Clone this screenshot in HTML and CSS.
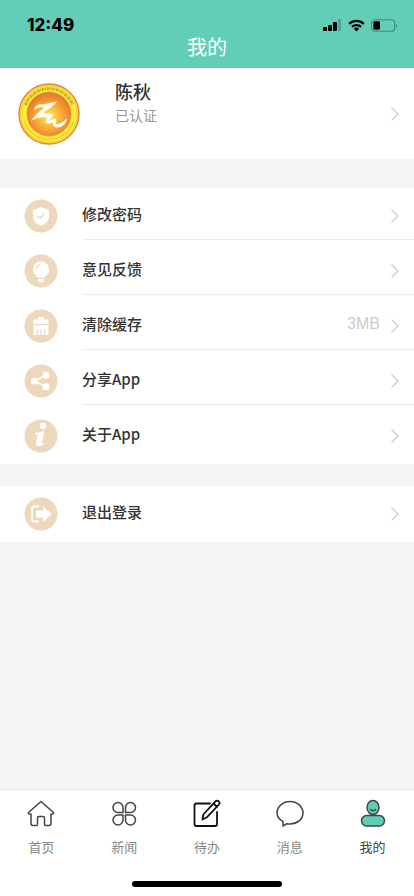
FILE: index.html
```html
<!doctype html>
<html lang="zh-CN">
<head>
    <meta charset="UTF-8">
    <meta name="viewport" content="width=device-width, initial-scale=1.0">
    <title>我的</title>
    <link rel="stylesheet" href="styles.css">
</head>
<body>

<header class="header">
    <div class="status">
        <span class="time">12:49</span>
        <div class="signals">
            <svg width="19" height="13" viewBox="0 0 19 13">
                <rect x="0" y="8" width="4" height="4" rx="1"/>
                <rect x="5" y="6" width="4" height="6" rx="1"/>
                <rect x="10" y="3" width="4" height="9" rx="1"/>
                <rect x="15" y="0" width="3" height="12" rx="1" opacity=".2"/>
            </svg>
            <svg width="17" height="13" viewBox="0 0 17 13">
                <path d="M1.2 4.8a10.6 10.6 0 0 1 14.6 0M4 7.8a6.6 6.6 0 0 1 9 0" fill="none" stroke="#000" stroke-width="2.3"/>
                <path d="M5.9 9.7a3.8 3.8 0 0 1 5.2 0L8.500 12.4z"/>
            </svg>
            <svg width="27" height="13" viewBox="0 0 27 13">
                <rect x=".7" y=".7" width="23" height="11.6" rx="3" fill="none" stroke="#3d8f7d" stroke-width="1.1"/>
                <rect x="2.4" y="2.3" width="6.6" height="8.4" rx="1.4"/>
                <path d="M25 4.4q2 2.1 0 4.2z" fill="#3d8f7d"/>
            </svg>
        </div>
    </div>
    <h1 class="title">我的</h1>
</header>

<main class="content">
    <a href="#" class="profile">
        <svg class="avatar" viewBox="0 0 62 62">
            <defs>
                <radialGradient id="sun" cx=".5" cy=".56" r=".52">
                    <stop offset="0" stop-color="#ffee55"/>
                    <stop offset=".5" stop-color="#f8b236"/>
                    <stop offset="1" stop-color="#e67a2e"/>
                </radialGradient>
            </defs>
            <circle cx="31" cy="31" r="30" fill="#fdea3c" stroke="#d98a45" stroke-width="1.4"/>
            <circle cx="31" cy="31" r="28.400" fill="none" stroke="#f4c53a" stroke-width="1"/>
            <path d="M7.500 22a25.200 25.200 0 0 1 47-.5" fill="none" stroke="#c9a32a" stroke-width="3" stroke-dasharray="2 .8 1 .9"/>
            <path d="M6.500 38a25.500 25.500 0 0 0 49 0" fill="none" stroke="#e3c02c" stroke-width="1.4" stroke-dasharray="1 .6"/>
            <circle cx="31" cy="31" r="22" fill="url(#sun)" stroke="#dc9a35" stroke-width=".8"/>
            <path d="M16 27Q17.500 20.500 25 21.500L39 18.500Q36 23 25.500 29.500L35 31.500Q36 33 30.500 37.500L37.500 35.500Q39.500 36 37.500 41Q43 41.500 49.500 35Q47 45 38.500 44.500Q34 43.500 35 39.500Q30 41.500 28 40Q27 38 29.500 34.500Q20 33.500 13 38Q17 32 26 24.500Q20 23.500 16 27z" fill="#fffdf0"/>
        </svg>
        <div class="user">
            <span class="name">陈秋</span>
            <span class="verified">已认证</span>
        </div>
        <svg class="arrow" viewBox="0 0 10 16"><path d="M1.500 1.500L8 8l-6.500 6.500"/></svg>
    </a>

    <nav class="menu">
        <a href="#" class="item">
            <svg class="icon" viewBox="0 0 34 34">
                <circle class="disc" cx="17" cy="17" r="16.500"/>
                <path d="M17 8l8 3v6.500q0 6-8 9.500q-8-3.500-8-9.500V11z"/>
                <path class="cut" d="M13.500 17l2.500 2.500 4.500-5"/>
            </svg>
            <span class="label">修改密码</span>
            <svg class="arrow" viewBox="0 0 10 16"><path d="M1.500 1.500L8 8l-6.500 6.500"/></svg>
        </a>
        <a href="#" class="item">
            <svg class="icon" viewBox="0 0 34 34">
                <circle class="disc" cx="17" cy="17" r="16.500"/>
                <path d="M17 7.500a8 8 0 0 1 5 14.200q-1.500 1.300-1.500 2.300h-7q0-1-1.500-2.300A8 8 0 0 1 17 7.500zM13.500 25h7v1.500l-2 2h-3l-2-2z"/>
                <path class="cut" d="M12.200 14.500q.8-3 3.800-3.800"/>
            </svg>
            <span class="label">意见反馈</span>
            <svg class="arrow" viewBox="0 0 10 16"><path d="M1.500 1.500L8 8l-6.500 6.500"/></svg>
        </a>
        <a href="#" class="item">
            <svg class="icon" viewBox="0 0 34 34">
                <circle class="disc" cx="17" cy="17" r="16.500"/>
                <path d="M14 10.500V8h6v2.500h4.500V15H9.500v-4.500zM9.500 16.300h15V26h-15z"/>
                <path class="cut" d="M13.500 20.500V26M17 20.500V26M20.500 20.500V26"/>
            </svg>
            <span class="label">清除缓存</span>
            <span class="size">3MB</span>
            <svg class="arrow" viewBox="0 0 10 16"><path d="M1.500 1.500L8 8l-6.500 6.500"/></svg>
        </a>
        <a href="#" class="item">
            <svg class="icon" viewBox="0 0 34 34">
                <circle class="disc" cx="17" cy="17" r="16.500"/>
                <path d="M22 11.500l-12 5.500 12 5.500" fill="none" stroke="#fff" stroke-width="1.700"/>
                <circle cx="22" cy="11.300" r="3.500"/>
                <circle cx="10.300" cy="17" r="3.500"/>
                <circle cx="22" cy="22.700" r="3.500"/>
            </svg>
            <span class="label">分享App</span>
            <svg class="arrow" viewBox="0 0 10 16"><path d="M1.500 1.500L8 8l-6.500 6.500"/></svg>
        </a>
        <a href="#" class="item">
            <svg class="icon" viewBox="0 0 34 34">
                <circle class="disc" cx="17" cy="17" r="16.500"/>
                <circle cx="19" cy="7" r="3.200"/>
                <path d="M11 14.200q4.500-1.500 9.500-2l-2.700 12q1.200.3 3-1.200-1.500 4-6 4.300-3.300 0-2.800-3.600l2-8.200q-1-.5-3 .5z"/>
            </svg>
            <span class="label">关于App</span>
            <svg class="arrow" viewBox="0 0 10 16"><path d="M1.500 1.500L8 8l-6.500 6.500"/></svg>
        </a>
    </nav>

    <nav class="menu logout">
        <a href="#" class="item">
            <svg class="icon" viewBox="0 0 34 34">
                <circle class="disc" cx="17" cy="17" r="16.500"/>
                <path d="M15 9.500H10Q8 9.500 8 11.500v11q0 2 2 2h5" fill="none" stroke="#fff" stroke-width="1.800"/>
                <path d="M12 13.500h7V9l9 8-9 8v-4.500h-7z"/>
            </svg>
            <span class="label">退出登录</span>
            <svg class="arrow" viewBox="0 0 10 16"><path d="M1.500 1.500L8 8l-6.500 6.500"/></svg>
        </a>
    </nav>
</main>

<footer class="footer">
    <nav class="tabs">
        <a href="#" class="tab">
            <svg viewBox="0 0 30 30">
                <path d="M2.500 13.500L15 2.500l12.500 11q.5 1.500-1 1.500H25v9.500q0 2-2 2h-3.500q-1 0-1-1V19q0-1.500-1.500-1.500h-4Q11.500 17.500 11.500 19v6.500q0 1-1 1H7q-2 0-2-2V15H3.500Q2 15 2.500 13.500z"/>
            </svg>
            <span>首页</span>
        </a>
        <a href="#" class="tab">
            <svg viewBox="0 0 30 30">
                <path d="M14 13.500H9A5 5 0 1 1 14 8.500zM16.500 13.500V8.500a5 5 0 1 1 5 5zM14 16v5a5 5 0 1 1-5-5zM16.500 16h5a5 5 0 1 1-5 5z"/>
            </svg>
            <span>新闻</span>
        </a>
        <a href="#" class="tab">
            <svg class="dark" viewBox="0 0 30 30">
                <path d="M18 4.500H4.500q-2 0-2 2V25q0 2 2 2H23q2 0 2-2V13"/>
                <path d="M10.500 20.500l.8-5L23.500 2.300q1.500-1.300 3.200 0 1.600 1.600.3 3.200L14.800 18.300zM21.500 4.500l3.500 3.500"/>
            </svg>
            <span>待办</span>
        </a>
        <a href="#" class="tab">
            <svg viewBox="0 0 30 30">
                <path d="M8 22.500C4 20.500 2 17.500 2 14 2 7.500 8 2.500 15 2.500s13 5 13 11.500-6 11-13 11q-1.500 0-3-.3L8 27z"/>
            </svg>
            <span>消息</span>
        </a>
        <a href="#" class="tab active">
            <svg viewBox="0 0 30 30">
                <rect x="3.500" y="16.500" width="23" height="10.500" rx="5.200"/>
                <ellipse cx="15" cy="8.500" rx="6" ry="7"/>
                <path d="M12.500 10.500q2.500 2.500 5 0"/>
            </svg>
            <span>我的</span>
        </a>
    </nav>
    <div class="home-bar"></div>
</footer>

</body>
</html>
```
FILE: styles.css
```css
* {
    box-sizing: border-box;
}

body {
    margin: 0;
    min-height: 100vh;
    display: flex;
    flex-direction: column;
    background: #f4f4f4;
    color: #333;
    font-family: "Noto Sans CJK SC", sans-serif;
}

a {
    color: inherit;
    text-decoration: none;
}

svg {
    display: block;
    flex-shrink: 0;
}

.header {
    background: #62ceb7;
    padding-top: 14px;
    height: 68px;
}

.status {
    display: flex;
    justify-content: space-between;
    align-items: center;
    padding: 0 16px 0 27px;
    height: 22px;
}

.time {
    font-family: Inter, sans-serif;
    font-size: 17px;
    font-weight: 800;
    color: #000;
}

.signals {
    display: flex;
    gap: 6px;
}

.title {
    margin: 0;
    font-size: 20px;
    line-height: 22px;
    font-weight: 400;
    text-align: center;
    color: #fff;
}

.content {
    flex: 1;
}

.profile {
    display: flex;
    align-items: center;
    height: 91px;
    padding: 0 14px 0 18px;
    background: #fff;
}

.avatar {
    width: 62px;
    height: 62px;
}

.user {
    flex: 1;
    display: flex;
    flex-direction: column;
    margin-left: 35px;
    padding-bottom: 22px;
}

.name {
    font-size: 18px;
    line-height: 24px;
    font-weight: 500;
}

.verified {
    font-size: 14px;
    line-height: 24px;
    color: #999;
}

.arrow {
    width: 10px;
    height: 16px;
    fill: none;
    stroke: #ccc;
    stroke-width: 1.3;
}

.menu {
    display: flex;
    flex-direction: column;
    gap: 3px;
    margin-top: 29px;
    padding-bottom: 4px;
    background: #fff;
}

.logout {
    margin-top: 22px;
}

.item {
    position: relative;
    display: flex;
    align-items: center;
    height: 52px;
    padding: 3px 14px 0 24px;
}

/* divider starts under the label, not under the icon */
.item:not(:last-child)::after {
    content: '';
    position: absolute;
    left: 82px;
    right: 0;
    bottom: 0;
    height: 1px;
    background: #ebebeb;
}

.icon {
    width: 34px;
    height: 34px;
    fill: #fff;
}

.disc {
    fill: #edd8bb;
}

.cut {
    fill: none;
    stroke: #edd8bb;
    stroke-width: 1.3;
}

.label {
    flex: 1;
    margin-left: 24px;
    padding-bottom: 4px;
    font-size: 15px;
    line-height: 22px;
    font-weight: 500;
}

.size {
    margin-right: 10px;
    padding-bottom: 3px;
    font-family: "Liberation Sans", sans-serif;
    font-size: 16px;
    line-height: 22px;
    color: #ccc;
}

.footer {
    padding-bottom: 9px;
    background: #fff;
    border-top: 1px solid #e8e8e8;
}

.tabs {
    display: flex;
    padding-top: 9px;
}

.tab {
    flex: 1;
    display: flex;
    flex-direction: column;
    align-items: center;
    gap: 8px;
    font-size: 13px;
    line-height: 20px;
    color: #888;
}

.tab svg {
    width: 30px;
    height: 30px;
    fill: none;
    stroke: #444;
    stroke-width: 1.5;
    stroke-linejoin: round;
    stroke-linecap: round;
}

.tab .dark {
    stroke: #111;
    stroke-width: 1.8;
}

.tab.active {
    color: #444;
}

.tab.active svg {
    fill: #5dceb5;
}

.home-bar {
    width: 36%;
    height: 6px;
    margin: 24px auto 0;
    border-radius: 3px;
    background: #000;
}
```
